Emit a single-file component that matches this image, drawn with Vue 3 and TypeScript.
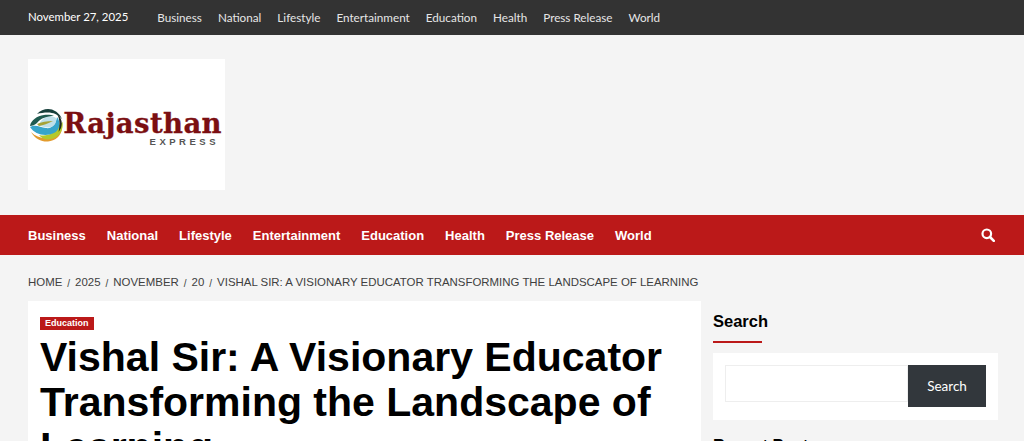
<template>
  <div class="page">
    <div class="top-bar">
      <span class="date">November 27, 2025</span>
      <nav class="top-nav">
        <a v-for="item in navItems" :key="item">{{ item }}</a>
      </nav>
    </div>

    <header class="masthead">
      <div class="logo">
        <svg class="globe" width="34" height="34" viewBox="0 0 34 34">
          <path d="M2 24 C6 31 13 34 19 33.5 C26 33 32 28 33 21 C30 27 24 30 17 30 C11 30 6 28 2 24Z" fill="#e39b2d" />
          <path d="M10 27 C18 29 27 25 30 17 L33.5 14 C35 23 29 31 19 31.5 C15 31.5 12 29.5 10 27Z" fill="#b4c92c" />
          <path d="M1 19 C6 16 11 19 17 20 C23 21 27 16 28 9 C32 14 31 22 25 25 C17 29 6 27 1 19Z" fill="#37a5cb" />
          <path d="M12 13 C16 8 23 7 27 10 C28 15 25 19 20 19.500 C16 20 13 18 9 17.500Z" fill="#bfe0ea" />
          <path d="M8 16 C12 14 18 13 24 13 C19 15.500 14 17.500 10 18Z" fill="#a5a338" />
          <path d="M1 18 C2 12 8 8 15 7 C19 6.500 23 7 25 8 C18 8 12 10 8 15 C6 17 3 18 1 18Z" fill="#1e5b50" />
          <path d="M8 6 C12 1.500 18 0 23 1.500 C27 3 31 6 33 11 C29 6.500 24 4.500 19 4.500 C15 4.500 11 5 8 6Z" fill="#173f3b" />
          <path d="M28 6 C32 9 34 14 32 20 C31 22 30 23 29.500 24 C31 18 31 11 28 6Z" fill="#1d2a26" />
        </svg>
        <div class="logo-text">
          <span class="logo-name">Rajasthan</span>
          <span class="logo-sub">EXPRESS</span>
        </div>
      </div>
    </header>

    <div class="main-nav">
      <nav class="main-links">
        <a v-for="item in navItems" :key="item">{{ item }}</a>
      </nav>
      <svg class="search-icon" width="14" height="14" viewBox="0 0 14 14" fill="none" stroke="#fff">
        <circle cx="5.8" cy="5.8" r="4.3" stroke-width="2.2" />
        <path d="M9 9 L12.8 12.8" stroke-width="2.6" stroke-linecap="round" />
      </svg>
    </div>

    <div class="breadcrumbs">
      <template v-for="(crumb, i) in crumbs" :key="crumb">
        <span>{{ crumb }}</span>
        <i v-if="i < crumbs.length - 1">/</i>
      </template>
    </div>

    <div class="content">
      <main class="article">
        <span class="badge">Education</span>
        <h1>Vishal Sir: A Visionary Educator Transforming the Landscape of Learning</h1>
      </main>
      <aside class="sidebar">
        <h2>Search</h2>
        <div class="search-card">
          <input class="search-input" type="text" />
          <button class="search-btn">Search</button>
        </div>
        <h2 class="recent">Recent Posts</h2>
      </aside>
    </div>
  </div>
</template>

<script setup lang="ts">
const navItems: string[] = [
  'Business',
  'National',
  'Lifestyle',
  'Entertainment',
  'Education',
  'Health',
  'Press Release',
  'World',
]

const crumbs: string[] = [
  'Home',
  '2025',
  'November',
  '20',
  'Vishal Sir: A Visionary Educator Transforming the Landscape of Learning',
]
</script>

<style>
html, body {
  margin: 0;
  height: 100%;
  overflow: hidden;
  background: #f4f4f4;
}
</style>

<style scoped>
.page {
  font-family: "Liberation Sans", Arial, sans-serif;
  color: #000;
}

.top-bar {
  display: flex;
  align-items: center;
  height: 35px;
  padding: 0 28px 2px;
  box-sizing: border-box;
  background: #333;
  color: #fff;
  font-family: Lato, sans-serif;
  font-size: 11.7px;
}

.date {
  font-size: 11.4px;
  margin-right: 29px;
}

.top-nav {
  display: flex;
  gap: 16px;
  color: #e6e6e6;
}

.masthead {
  height: 180px;
  padding: 24px 28px 0;
  box-sizing: border-box;
}

.logo {
  display: flex;
  align-items: center;
  width: 197px;
  height: 131px;
  background: #fff;
  padding-left: 1px;
  box-sizing: border-box;
}

.globe {
  flex: none;
  margin-right: 3px;
}

.logo-text {
  display: flex;
  flex-direction: column;
  align-items: flex-end;
  width: 156px;
  margin-top: 6px;
}

.logo-name {
  font-family: "DejaVu Serif", serif;
  font-weight: 700;
  font-size: 27.5px;
  line-height: 28px;
  letter-spacing: 0.4px;
  color: #7b0f12;
  -webkit-text-stroke: 0.3px #7b0f12;
}

.logo-sub {
  font-size: 9.5px;
  font-weight: 700;
  line-height: 10px;
  letter-spacing: 3.5px;
  color: #555;
  margin-right: 3px;
}

.main-nav {
  display: flex;
  align-items: center;
  justify-content: space-between;
  height: 40px;
  padding: 0 29px 0 28px;
  background: #bb1919;
  color: #fff;
}

.main-links {
  display: flex;
  gap: 21px;
  font-size: 13px;
  font-weight: 700;
}

.breadcrumbs {
  display: flex;
  align-items: center;
  height: 46px;
  padding: 8px 28px 0;
  box-sizing: border-box;
  font-size: 11.45px;
  text-transform: uppercase;
  color: #404040;
}

.breadcrumbs i {
  margin: 3px 5px 0;
  font-size: 10px;
  font-style: normal;
}

.content {
  display: flex;
  gap: 12px;
  padding: 0 26px 0 28px;
}

.article {
  width: 673px;
  flex: none;
  padding: 16px 12px;
  box-sizing: border-box;
  background: #fff;
}

.badge {
  display: block;
  width: fit-content;
  padding: 0 5px;
  background: #bb1919;
  color: #fff;
  font-size: 9px;
  font-weight: 700;
  line-height: 13px;
}

h1 {
  margin: 5px 0 0;
  font-size: 41px;
  line-height: 45px;
  font-weight: 700;
}

.sidebar {
  flex: 1;
}

h2 {
  margin: 0;
  width: fit-content;
  font-size: 16.5px;
  line-height: 20px;
  font-weight: 700;
}

.sidebar h2:first-child {
  position: relative;
  margin-top: 10px;
  padding-bottom: 12px;
}

.sidebar h2:first-child::after {
  content: "";
  position: absolute;
  left: 0;
  bottom: 0;
  width: 49px;
  height: 2px;
  background: #bb1919;
}

.search-card {
  display: flex;
  align-items: flex-start;
  margin-top: 10px;
  padding: 12px;
  height: 67px;
  box-sizing: border-box;
  background: #fff;
}

.search-input {
  width: 183px;
  height: 37px;
  padding: 0;
  box-sizing: border-box;
  border: 1px solid #eee;
  background: #fff;
}

.search-btn {
  width: 78px;
  height: 42px;
  border: none;
  background: #32373c;
  color: #fff;
  font-family: Lato, sans-serif;
  font-size: 13.5px;
}

.recent {
  margin-top: 15px;
}
</style>
